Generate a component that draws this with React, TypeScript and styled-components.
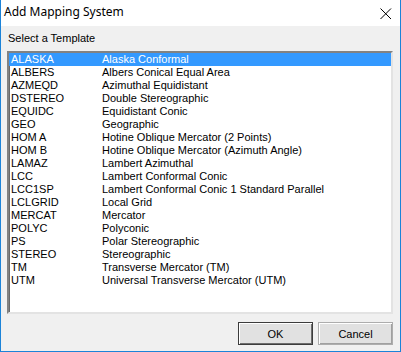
import styled, { createGlobalStyle } from "styled-components";

const templates: [string, string][] = [
  ["ALASKA", "Alaska Conformal"],
  ["ALBERS", "Albers Conical Equal Area"],
  ["AZMEQD", "Azimuthal Equidistant"],
  ["DSTEREO", "Double Stereographic"],
  ["EQUIDC", "Equidistant Conic"],
  ["GEO", "Geographic"],
  ["HOM A", "Hotine Oblique Mercator (2 Points)"],
  ["HOM B", "Hotine Oblique Mercator (Azimuth Angle)"],
  ["LAMAZ", "Lambert Azimuthal"],
  ["LCC", "Lambert Conformal Conic"],
  ["LCC1SP", "Lambert Conformal Conic 1 Standard Parallel"],
  ["LCLGRID", "Local Grid"],
  ["MERCAT", "Mercator"],
  ["POLYC", "Polyconic"],
  ["PS", "Polar Stereographic"],
  ["STEREO", "Stereographic"],
  ["TM", "Transverse Mercator (TM)"],
  ["UTM", "Universal Transverse Mercator (UTM)"],
];

const GlobalStyle = createGlobalStyle`
  html, body {
    margin: 0;
    padding: 0;
    background: #ffffff;
  }
  * { box-sizing: border-box; }
`;

export default function App() {
  return (
    <>
      <GlobalStyle />
      <Window>
        <TitleBar>
          <Title>Add Mapping System</Title>
          <CloseButton>
            <svg width="12" height="12" viewBox="0 0 12 12">
              <path d="M0.5 0.5 L11 11 M11 0.5 L0.5 11" stroke="#000" strokeWidth="1" fill="none" />
            </svg>
          </CloseButton>
        </TitleBar>
        <Body>
          <Label>Select a Template</Label>
          <ListBox>
            {templates.map(([code, name], i) => (
              <Row key={code} selected={i === 0}>
                <Code>{code}</Code>
                <span>{name}</span>
              </Row>
            ))}
          </ListBox>
          <Buttons>
            <Button isDefault>OK</Button>
            <Button>Cancel</Button>
          </Buttons>
        </Body>
      </Window>
    </>
  );
}

const Window = styled.div`
  width: 401px;
  height: 352px;
  display: flex;
  flex-direction: column;
  border: 1px solid #1c83d8;
  border-top: none;
  background: #f0f0f0;
  font-family: "Liberation Sans", Arial, sans-serif;
  font-size: 11px;
  color: #000;
`;

const TitleBar = styled.div`
  height: 26px;
  flex: none;
  background: #ffffff;
  display: flex;
  align-items: center;
  justify-content: space-between;
  padding: 0 8px 2px 3px;
`;

const Title = styled.span`
  font-family: "Noto Sans", "Open Sans", sans-serif;
  font-size: 12px;
  line-height: 16px;
`;

const CloseButton = styled.span`
  display: flex;
  width: 12px;
  height: 12px;
  margin-top: 3px;
`;

const Body = styled.div`
  flex: 1;
  display: flex;
  flex-direction: column;
  padding: 6px 7px 0 6px;
`;

const Label = styled.div`
  height: 13px;
  line-height: 13px;
  margin: 0 0 6px 1px;
`;

const ListBox = styled.div`
  height: 263px;
  background: #ffffff;
  border-style: solid;
  border-width: 2px;
  border-color: #828282 #e3e3e3 #e3e3e3 #828282;
  box-shadow: inset 1px 1px 0 #696969;
  padding: 0;
  display: flex;
  flex-direction: column;
`;

const Row = styled.div<{ selected?: boolean }>`
  height: 13px;
  line-height: 13px;
  display: flex;
  padding-left: 2px;
  white-space: nowrap;
  background: ${(p) => (p.selected ? "#3399ff" : "transparent")};
  color: ${(p) => (p.selected ? "#ffffff" : "#000000")};
`;

const Code = styled.span`
  width: 91px;
  flex: none;
`;

const Buttons = styled.div`
  display: flex;
  justify-content: flex-end;
  gap: 5px;
  margin-top: 8px;
`;

const Button = styled.div<{ isDefault?: boolean }>`
  width: 75px;
  height: 23px;
  display: flex;
  align-items: center;
  justify-content: center;
  background: #e1e1e1;
  border: 1px solid ${(p) => (p.isDefault ? "#3c3c3c" : "#adadad")};
  box-shadow: ${(p) =>
    p.isDefault
      ? "inset 1px 1px 0 #ffffff, inset -1px -1px 0 #6d6d6d"
      : "inset 1px 1px 0 #ffffff, inset -1px -1px 0 #a0a0a0"};
  font-size: 11px;
`;
